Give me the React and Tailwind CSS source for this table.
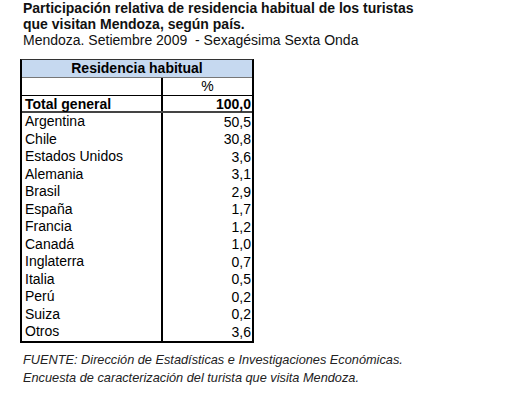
import React from 'react';

const rows = [
  ['Argentina', '50,5'],
  ['Chile', '30,8'],
  ['Estados Unidos', '3,6'],
  ['Alemania', '3,1'],
  ['Brasil', '2,9'],
  ['España', '1,7'],
  ['Francia', '1,2'],
  ['Canadá', '1,0'],
  ['Inglaterra', '0,7'],
  ['Italia', '0,5'],
  ['Perú', '0,2'],
  ['Suiza', '0,2'],
  ['Otros', '3,6'],
];

export default function App() {
  return (
    <div
      className="w-[528px] h-[400px] bg-white text-[#111] overflow-hidden"
      style={{ fontFamily: '"Liberation Sans", Arial, sans-serif' }}
    >
      {/* Title */}
      <div className="pl-[23px] pt-[0px]">
        <div className="text-[14px] font-bold leading-[16px]">
          Participación relativa de residencia habitual de los turistas
        </div>
        <div className="text-[14px] font-bold leading-[16px]">
          que visitan Mendoza, según país.
        </div>
        <div className="text-[14px] leading-[17px] whitespace-pre">
          Mendoza. Setiembre 2009  - Sexagésima Sexta Onda
        </div>
      </div>

      {/* Table */}
      <div className="ml-[20px] mt-[10px] w-[234px] border-t border-[#333] border-l-2 border-l-black border-r-2 border-r-black border-b-2 border-b-black text-[14px] leading-[17px] text-black">
        <div className="h-[18px] bg-[#c6d9f0] border-b border-[#777] text-center font-bold">
          Residencia habitual
        </div>
        <div className="flex h-[18px] border-b border-black">
          <div className="w-[141px] border-r-2 border-black" />
          <div className="flex-1 text-center">%</div>
        </div>
        <div className="flex h-[17px] border-b-2 border-[#444] font-bold">
          <div className="w-[141px] border-r-2 border-black pl-[3px]">Total general</div>
          <div className="flex-1 text-right pr-[1px]">100,0</div>
        </div>
        {rows.map(([name, val]) => (
          <div key={name} className="flex h-[17.5px] items-end">
            <div className="w-[141px] h-full border-r-2 border-black pl-[3px]">{name}</div>
            <div className="flex-1 text-right pr-[1px]">{val}</div>
          </div>
        ))}
      </div>

      {/* Footer */}
      <div className="pl-[23px] mt-[8px] text-[12.75px] italic leading-[18px] text-[#222]">
        <div>FUENTE: Dirección de Estadísticas e Investigaciones Económicas.</div>
        <div>Encuesta de caracterización del turista que visita Mendoza.</div>
      </div>
    </div>
  );
}
